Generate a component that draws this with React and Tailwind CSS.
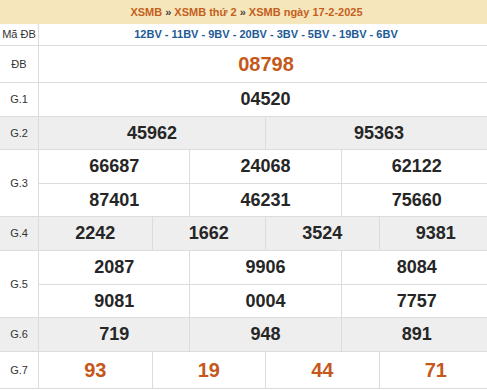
import React from "react";

const rows = [
  { label: "G.1", h: ["h-[33px]"], sets: [["04520"]], gray: false },
  { label: "G.2", h: ["h-[32px]"], sets: [["45962", "95363"]], gray: true },
  { label: "G.3", h: ["h-[34px]", "h-[32px]"], sets: [["66687", "24068", "62122"], ["87401", "46231", "75660"]], gray: false },
  { label: "G.4", h: ["h-[33px]"], sets: [["2242", "1662", "3524", "9381"]], gray: true },
  { label: "G.5", h: ["h-[34px]", "h-[32px]"], sets: [["2087", "9906", "8084"], ["9081", "0004", "7757"]], gray: false },
  { label: "G.6", h: ["h-[33px]"], sets: [["719", "948", "891"]], gray: true },
];

const cols = { 1: "grid-cols-1", 2: "grid-cols-2", 3: "grid-cols-3", 4: "grid-cols-4" };

function Label({ children, className = "" }) {
  return (
    <div className={`w-[39px] shrink-0 border-r border-[#dcdcdc] flex items-center justify-center text-[11px] text-[#333] ${className}`}>
      {children}
    </div>
  );
}

function NumberRow({ nums, h, orange, last }) {
  return (
    <div className={`grid ${cols[nums.length]} ${h} ${last ? "" : "border-b border-[#dcdcdc]"}`}>
      {nums.map((n, i) => (
        <div
          key={i}
          className={`flex items-center justify-center border-r border-[#dcdcdc] font-bold ${orange ? "text-[20px] text-[#c5581b]" : "text-[18px] text-[#262626]"}`}
        >
          {n}
        </div>
      ))}
    </div>
  );
}

export default function App() {
  return (
    <div className="w-[487px] h-[390px] overflow-hidden bg-white" style={{ fontFamily: '"Liberation Sans", Arial, sans-serif' }}>
      <div className="w-[493px]">
        {/* Title */}
        <div className="h-[24px] bg-[#f6e6bc] flex items-center justify-center text-[11px] font-bold text-[#c35f1c]">
          <span>XSMB</span>
          <span className="mx-[3px] text-[#444]">»</span>
          <span>XSMB thứ 2</span>
          <span className="mx-[3px] text-[#444]">»</span>
          <span>XSMB ngày 17-2-2025</span>
        </div>

        {/* Mã ĐB */}
        <div className="flex h-[22px] border-b border-[#dcdcdc]">
          <Label className="text-[10px]">Mã ĐB</Label>
          <div className="flex-1 flex items-center justify-center text-[11px] font-bold text-[#1c5b97]">
            12BV - 11BV - 9BV - 20BV - 3BV - 5BV - 19BV - 6BV
          </div>
        </div>

        {/* ĐB */}
        <div className="flex h-[37px] border-b border-[#dcdcdc]">
          <Label>ĐB</Label>
          <div className="flex-1 flex items-center justify-center text-[20px] font-bold text-[#c5581b]">08798</div>
        </div>

        {rows.map((r) => (
          <div key={r.label} className={`flex border-b border-[#dcdcdc] ${r.gray ? "bg-[#eeeeee]" : "bg-white"}`}>
            <Label>{r.label}</Label>
            <div className="flex-1 flex flex-col">
              {r.sets.map((nums, i) => (
                <NumberRow key={i} nums={nums} h={r.h[i]} last={i === r.sets.length - 1} />
              ))}
            </div>
          </div>
        ))}

        {/* G.7 */}
        <div className="flex border-b border-[#dcdcdc]">
          <Label>G.7</Label>
          <div className="flex-1">
            <NumberRow nums={["93", "19", "44", "71"]} h="h-[36px]" orange last />
          </div>
        </div>
      </div>
    </div>
  );
}
